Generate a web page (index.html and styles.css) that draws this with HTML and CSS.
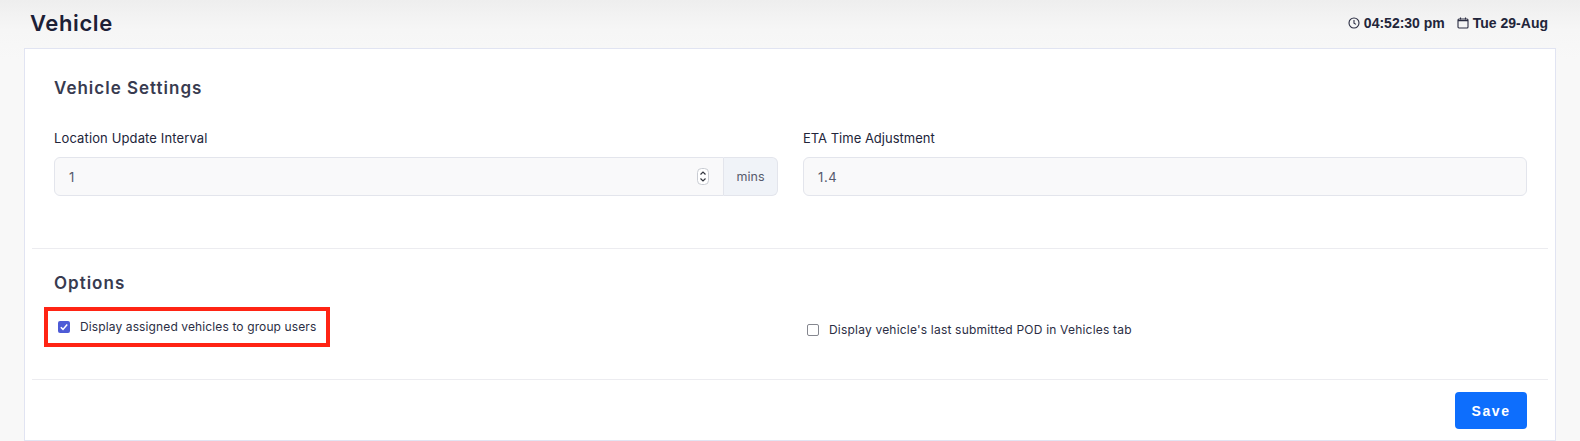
FILE: index.html
```html
<!DOCTYPE html>
<html lang="en">
<head>
<meta charset="utf-8">
<title>Vehicle</title>
<link rel="stylesheet" href="styles.css">
</head>
<body>
<header class="topbar">
  <h1 class="page-title">Vehicle</h1>
  <div class="clock">
    <span class="clock-item">
      <svg class="clock-icon" viewBox="0 0 12 12" fill="none" stroke="#2a2d42" stroke-width="1.1"><circle cx="6" cy="6" r="5"/><path d="M6 3v3.2l2 1.2"/></svg>
      04:52:30 pm
    </span>
    <span class="clock-item">
      <svg class="clock-icon" viewBox="0 0 12 12" fill="none" stroke="#2a2d42" stroke-width="1.1"><rect x="1" y="2" width="10" height="9" rx="1"/><path d="M3.5 .5v2M8.500 .5v2M1 3.600h10"/></svg>
      Tue 29-Aug
    </span>
  </div>
</header>
<main class="card">
  <section class="settings">
    <h2 class="section-title">Vehicle Settings</h2>
    <div class="field-grid">
      <div class="field">
        <label class="field-label field-label-wide">Location Update Interval</label>
        <div class="input-group">
          <div class="input input-joined">
            <span>1</span>
            <svg class="spinner" viewBox="0 0 12 17" fill="none"><rect x=".5" y=".5" width="11" height="16" rx="4" fill="#fff" stroke="#c9ccd3"/><path d="M3.500 6.500 6 4l2.500 2.500M3.500 10.500 6 13l2.500-2.500" stroke="#33363f" stroke-width="1.200"/></svg>
          </div>
          <span class="addon">mins</span>
        </div>
      </div>
      <div class="field">
        <label class="field-label">ETA Time Adjustment</label>
        <div class="input"><span>1.4</span></div>
      </div>
    </div>
  </section>
  <section class="options">
    <h2 class="section-title">Options</h2>
    <div class="option-grid">
      <div class="highlight">
        <label class="check">
          <span class="box box-on"><svg viewBox="0 0 12 12" fill="none"><path d="M2.800 6.200 5 8.400l4.200-4.800" stroke="#fff" stroke-width="1.500"/></svg></span>
          Display assigned vehicles to group users
        </label>
      </div>
      <label class="check check-second">
        <span class="box"></span>
        Display vehicle's last submitted POD in Vehicles tab
      </label>
    </div>
  </section>
  <footer class="actions">
    <button class="save" type="button">Save</button>
  </footer>
</main>
</body>
</html>
```

FILE: styles.css
```css
* { box-sizing: border-box; }
html, body { margin: 0; height: 441px; overflow: hidden; }
body {
  background: linear-gradient(#eeeeee 0, #f6f6f6 30px, #f8f8f8 60px);
  font-family: Inter, "Liberation Sans", sans-serif;
  color: #22253a;
}
.topbar {
  height: 48px;
  padding: 0 32px 2px 30px;
  display: flex;
  align-items: center;
  justify-content: space-between;
}
.page-title {
  margin: 0;
  font-size: 22px;
  line-height: 28px;
  font-weight: 600;
  letter-spacing: .6px;
  color: #1c2036;
}
.clock {
  display: flex;
  gap: 12px;
  font-family: "Liberation Sans", Arial, sans-serif;
  font-size: 14px;
  font-weight: 700;
  color: #22253a;
}
.clock-item { display: flex; align-items: center; gap: 4px; }
.clock-icon { width: 12px; height: 12px; }
.card {
  margin: 0 24px;
  height: 393px;
  background: #fff;
  border: 1px solid #e1e4f2;
  padding: 0 7px;
}
.settings {
  height: 200px;
  padding: 29px 22px 0;
  border-bottom: 1px solid #ececf0;
}
.section-title {
  margin: 0;
  font-size: 17px;
  line-height: 21px;
  font-weight: 600;
  letter-spacing: 1px;
  color: #383b50;
}
.field-grid {
  margin-top: 30px;
  display: grid;
  grid-template-columns: 724px 724px;
  column-gap: 25px;
}
.field-label {
  display: block;
  font-size: 13px;
  line-height: 18px;
  color: #22253a;
  margin-bottom: 10px;
}
.field-label-wide { letter-spacing: .13px; }
.input {
  height: 39px;
  padding: 0 14px;
  display: flex;
  align-items: center;
  justify-content: space-between;
  background: #f9f9fa;
  border: 1px solid #e3e5ec;
  border-radius: 6px;
  font-size: 13px;
  letter-spacing: .6px;
  color: #565a6c;
}
.input-group { display: flex; }
.input-joined {
  flex: 1;
  border-radius: 6px 0 0 6px;
  padding-right: 14px;
}
.spinner { width: 12px; height: 17px; }
.addon {
  width: 54px;
  height: 39px;
  display: flex;
  align-items: center;
  justify-content: center;
  background: #f0f3f8;
  border: 1px solid #e3e5ec;
  border-left: 0;
  border-radius: 0 6px 6px 0;
  font-size: 12.500px;
  color: #565a6c;
}
.options {
  height: 131px;
  padding: 24px 22px 0;
  border-bottom: 1px solid #ececf0;
}
.option-grid {
  margin-top: 13px;
  margin-left: -10px;
  display: grid;
  grid-template-columns: 763px 1fr;
  align-items: start;
}
.highlight {
  width: 286px;
  height: 40px;
  border: 4px solid #ff2414;
  padding-left: 10px;
  display: flex;
  align-items: center;
}
.check {
  display: flex;
  align-items: center;
  gap: 10px;
  font-size: 12px;
  letter-spacing: .12px;
  line-height: 16px;
  color: #2b2e44;
}
.check-second { margin-top: 15px; letter-spacing: .2px; }
.box {
  width: 12px;
  height: 12px;
  border: 1.5px solid #85878f;
  border-radius: 2px;
  background: #fff;
  flex: none;
}
.box-on {
  background: #4d5bd6;
  border: 0;
  display: flex;
}
.box-on svg { width: 100%; height: 100%; }
.actions {
  padding: 12px 21px 0 0;
  display: flex;
  justify-content: flex-end;
}
.save {
  width: 72px;
  height: 37px;
  border: 0;
  border-radius: 4px;
  background: #0d6efd;
  color: #fff;
  font-family: "Liberation Sans", Arial, sans-serif;
  font-size: 14px;
  font-weight: 700;
  letter-spacing: 1.600px;
}
```
